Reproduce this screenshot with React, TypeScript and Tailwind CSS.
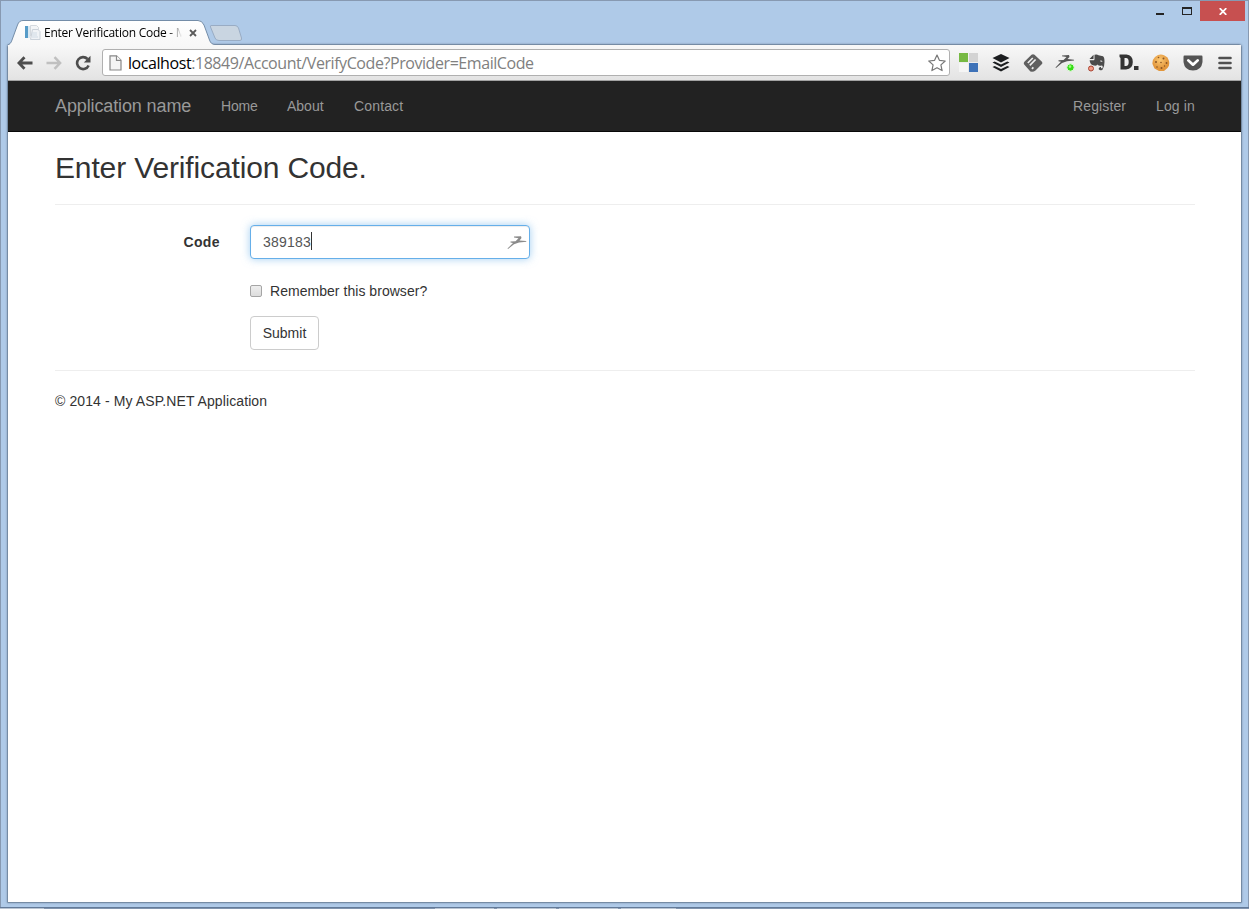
import type { ReactNode } from "react";

function Slot({ children }: { children: ReactNode }) {
  return <div className="flex h-full w-8 shrink-0 items-center justify-center pl-0.5 pt-px">{children}</div>;
}

function Bird({ className }: { className: string }) {
  return (
    <svg className={className} width="20" height="16" viewBox="0 0 20 16" fill="currentColor">
      <path d="M7 1.6 14 1.2 14.5 3 12.5 5.5 19 6 19.5 6.7 12 7.5 7 9.2 1 14 .5 13.6 6 8 3.5 7.4 3.5 6.6 8.5 6.3 11.5 3.2 7 2.5Z" />
    </svg>
  );
}

function TabStrip() {
  return (
    <div className="relative flex h-[43px] shrink-0 justify-between">
      <svg className="absolute left-0 top-0" width="260" height="44" viewBox="1 1 260 44">
        <defs>
          <linearGradient id="tab" x1="0" y1="0" x2="0" y2="1">
            <stop offset="0" stopColor="#fff" />
            <stop offset="1" stopColor="#f7f7f7" />
          </linearGradient>
        </defs>
        <path d="M7 45.5C10 44.5 11 43 12 40L17.5 25Q19 20.5 23 20.5H198Q202 20.5 204 25L209.500 40Q211 44.500 215 44.500L215 46H7Z" fill="url(#tab)" />
        <path d="M7.500 45C10 44 11 43 12 40L17.500 25Q19 20.500 23 20.500H198Q202 20.500 204 25L209.500 40Q211 44.500 215 44.500" fill="none" stroke="#748da8" />
        <path d="M211 25.500H235Q237.500 25.500 238.500 28L241.500 38Q242 40.500 240 40.500H219Q216 40.500 215 38L210.500 27Q210 25.500 211 25.500Z" fill="#c9d5e1" stroke="#99acc4" />
      </svg>
      <div className="relative flex items-center pl-6 pt-5">
        <svg width="16" height="16" viewBox="0 0 16 16">
          <path d="M0 1h3v12H0z" fill="#579cc8" />
          <path d="M3 1h2v12H3z" fill="#dbe9f2" />
          <path d="M5.500.500h6l2 2V11h-8z" fill="#f3f5f7" stroke="#d4d9de" />
          <path d="M7.500 4.500H13l2 2v8H5.500z" fill="#f0f3f6" stroke="#cbd2da" />
          <path d="M7 8h5M7 10h5M7 12h6" stroke="#d0dbe5" />
        </svg>
        <div className="ml-[3px] w-[138px] overflow-hidden whitespace-nowrap bg-gradient-to-r from-black from-90% to-transparent bg-clip-text font-['Open_Sans',sans-serif] text-[12px] leading-4 tracking-[-0.25px] text-transparent">
          Enter Verification Code - M
        </div>
        <svg className="ml-[7px]" width="8" height="8" viewBox="0 0 8 8">
          <path d="m1 1 6 6m0-6L1 7" stroke="#5b5b5b" strokeWidth="1.8" />
        </svg>
      </div>
      <div className="relative mr-[3px] flex h-5">
        <div className="mt-3 h-[2px] w-2 bg-[#242424]" />
        <div className="ml-[18px] mt-[6px] h-[8px] w-[10px] border border-t-2 border-[#242424]" />
        <div className="ml-2 flex h-5 w-[45px] items-center justify-center bg-[#c75050]">
          <svg width="8" height="7" viewBox="0 0 8 7">
            <path d="m.7.200 6.600 6.600m0-6.600L.7 6.800" stroke="#fff" strokeWidth="1.800" />
          </svg>
        </div>
      </div>
    </div>
  );
}

function Toolbar() {
  return (
    <div className="flex h-[36px] shrink-0 items-center border-b border-[#a3a3a3] bg-gradient-to-b from-[#f8f8f8] to-[#e3e3e3] pl-[9px]">
      <svg width="16" height="14" viewBox="0 0 16 14" fill="none" stroke="#4d4d4d" strokeWidth="2.800">
        <path d="M7.500 1.200 1.900 7l5.600 5.800M2 7h13.500" />
      </svg>
      <svg className="ml-[13px]" width="16" height="14" viewBox="0 0 16 14" fill="none" stroke="#c0c0c0" strokeWidth="2.500">
        <path d="m8.500 1.200 5.600 5.800-5.600 5.800M14 7H.5" />
      </svg>
      <svg className="ml-[13px]" width="16" height="16" viewBox="0 0 16 16">
        <path d="M12.500 4A6 6 0 1 0 13.600 10.500" fill="none" stroke="#4d4d4d" strokeWidth="2.600" />
        <path d="M15.500.800V7.500H8.800Z" fill="#4d4d4d" />
      </svg>
      <div className="ml-[11px] flex h-[27px] w-[848px] shrink-0 items-center rounded-[3px] border border-[#b0b0b0] bg-white pl-[6px] pr-[3px]">
        <svg width="13" height="16" viewBox="0 0 13 16">
          <path d="M1 .800H7.500L12 5.300V15H1Z" fill="#f5f5f5" stroke="#888" strokeWidth="1.200" />
          <path d="M7.500.800V5.300H12" fill="#fff" stroke="#888" strokeWidth="1.200" />
        </svg>
        <div className="ml-[6px] whitespace-nowrap font-['Open_Sans',sans-serif] text-[16px] leading-5 tracking-[-0.43px] text-[#808080]">
          <span className="text-black">localhost</span>:18849/Account/VerifyCode?Provider=EmailCode
        </div>
        <svg className="ml-auto" width="18" height="18" viewBox="0 0 18 18">
          <path d="m9 1 2.400 5.300 5.800.700-4.300 3.900 1.200 5.700L9 13.700l-5.100 2.900 1.200-5.700L.800 7l5.800-.700Z" fill="#fff" stroke="#777" strokeWidth="1.200" strokeLinejoin="round" />
        </svg>
      </div>
      <div className="ml-[2px] flex h-full">
        <Slot>
          <svg width="20" height="20" viewBox="0 0 20 20">
            <path d="M0 0h9v9H0z" fill="#77b943" />
            <path d="M10 0h9v9h-9z" fill="#d3d3d3" />
            <path d="M0 10h9v9H0z" fill="#f5f5f5" />
            <path d="M10 10h9v9h-9z" fill="#3e72b8" />
          </svg>
        </Slot>
        <Slot>
          <svg width="18" height="18" viewBox="0 0 18 18" fill="#1c1e20">
            <path d="m9 0 8.500 4L9 8.500.500 4Z" />
            <path d="m.500 8.400 2.200-1L9 10.500l6.300-3.100 2.200 1L9 12.900Z" />
            <path d="m.500 13 2.200-1L9 15.100l6.300-3.100 2.200 1L9 17.500Z" />
          </svg>
        </Slot>
        <Slot>
          <svg width="20" height="18" viewBox="0 0 20 18">
            <path d="M8.500.700Q10 -.400 11.500.700L18.700 7.500Q20 9 18.700 10.200L12.500 16.500Q11 17.700 9 17.700T6.500 16.500L1.200 10.500Q.300 9 1.400 7.700Z" fill="#5f5f5f" />
            <path d="m4.800 9 5-5m-3 7.300 5.800-5.800m-3.700 9.300 1.500-1.500" fill="none" stroke="#eee" strokeWidth="1.700" />
          </svg>
        </Slot>
        <Slot>
          <svg width="20" height="18" viewBox="0 0 20 18">
            <path d="M7 1.500 14 1 14.500 3 12.500 5 19 5.700 19 6.500 12 7.200 7 9 1 14 .500 13.500 6 7.700 3.500 7.200V6.300L8.500 6 11.500 3 7 2.300Z" fill="#565656" />
            <circle cx="15.500" cy="13.500" r="3.700" fill="#35dc16" stroke="#dff5da" />
            <circle cx="15" cy="12.600" r="1.300" fill="#9bff7e" />
          </svg>
        </Slot>
        <Slot>
          <svg width="18" height="18" viewBox="0 0 18 18">
            <path d="M5.600.800 5.500 5H1.500Z" fill="#444" />
            <path d="M6.500.800Q9-.200 10.500 1.300L15 2.200Q16.500 3 16.500 8T14.500 15.700Q12 17 11 15.500T12.300 13H13V14.200H14.500Q15.200 11.500 13.500 11.500 11 12.500 9.500 10.500 9 12 6 11.500 2 11 1.600 6.200H6Q6.500 6 6.500 5Z" fill="#4b4b4b" />
            <path d="M12 6.800q2-.700 2.500 1.300l-2-.500Z" fill="#e9e9e9" />
            <circle cx="3" cy="14.500" r="2.500" fill="#f49b86" stroke="#a94433" />
          </svg>
        </Slot>
        <Slot>
          <svg width="20" height="18" viewBox="0 0 20 18" fill="#343434">
            <path fillRule="evenodd" d="M.500.500H7.500Q13.800 1 13.800 8T7 15.500H1.500V4L.500 3ZM5.500 4V12H7Q9.700 12 9.700 8T7 4Z" />
            <path d="M15 12h4.500v4H15z" />
          </svg>
        </Slot>
        <Slot>
          <svg width="18" height="18" viewBox="0 0 18 18">
            <defs>
              <radialGradient id="cookie" cx=".45" cy=".35">
                <stop offset="0" stopColor="#fbc873" />
                <stop offset="1" stopColor="#e2963b" />
              </radialGradient>
            </defs>
            <path d="M6 1Q9-.300 12 1.200L15.500 3.500 17 7Q18 11 15.500 14L12 17H7L2.500 14.500.500 10Q0 6 3 3Z" fill="url(#cookie)" />
            <g fill="#8a5423">
              <circle cx="6.500" cy="3.500" r=".8" /><circle cx="11.500" cy="4.500" r="1" /><circle cx="4" cy="8" r="1" />
              <circle cx="9" cy="8.500" r=".8" /><circle cx="14.500" cy="9" r=".9" /><circle cx="5" cy="13" r=".8" />
              <circle cx="9.500" cy="14" r="1" /><circle cx="12.500" cy="12" r=".7" />
            </g>
          </svg>
        </Slot>
        <Slot>
          <svg width="20" height="16" viewBox="0 0 20 17" preserveAspectRatio="none">
            <path d="M1.500.500H18.500Q19.500.500 19.500 2V7.500Q18.500 16.500 10 16.500T.500 7.500V2Q.500.500 1.500.500Z" fill="#545454" />
            <path d="m5.300 5.700 4.700 4.600 4.700-4.600" fill="none" stroke="#fff" strokeWidth="2.800" strokeLinecap="round" strokeLinejoin="round" />
          </svg>
        </Slot>
        <Slot>
          <svg width="14" height="14" viewBox="0 0 14 14" stroke="#505050" strokeWidth="2.600" strokeLinecap="round">
            <path d="M1.500 2h11M1.500 7h11M1.500 12h11" />
          </svg>
        </Slot>
      </div>
    </div>
  );
}

function Page() {
  return (
    <div className="flex grow flex-col bg-white font-['Liberation_Sans',Arial,sans-serif] text-[14px] leading-5 text-[#333]">
      <nav className="flex h-[51px] shrink-0 items-center border-b border-[#080808] bg-[#222] pl-[47px] pr-[46px] text-[#999]">
        <span className="w-[136px] whitespace-nowrap text-[18px] tracking-[-0.12px]">Application name</span>
        <span className="ml-[30px] w-9 tracking-[-0.2px]">Home</span>
        <span className="ml-[30px] w-[37px]">About</span>
        <span className="ml-[30px] tracking-[0.15px]">Contact</span>
        <span className="ml-auto w-[53px] tracking-[0.12px]">Register</span>
        <span className="ml-[30px] w-[39px] tracking-[0.12px]">Log in</span>
      </nav>
      <main className="pl-[47px] pr-[46px] pt-[19px]">
        <h2 className="text-[30px] leading-[33px] tracking-[-0.14px]">Enter Verification Code.</h2>
        <hr className="mb-5 mt-5 border-[#eee]" />
        <form className="grid grid-cols-[165px_280px] gap-x-[30px]">
          <label className="pt-[7px] text-right font-bold tracking-[0.4px]">Code</label>
          <div className="flex h-[34px] items-center rounded-[4px] border border-[#66afe9] bg-white pl-3 pr-0.5 shadow-[inset_0_1px_1px_rgba(0,0,0,0.075),0_0_8px_rgba(102,175,233,0.6)]">
            <span className="tracking-[0.2px] text-[#555]">389183</span>
            <span className="-mt-0.5 h-[18px] w-px bg-[#333]" />
            <Bird className="ml-auto mt-0.5 text-[#8b8b8b]" />
          </div>
          <div className="col-start-2 mt-[22px] flex items-center">
            <span className="h-3 w-3 rounded-[2px] border border-[#a5a5a5] bg-gradient-to-b from-[#eee] to-[#ddd]" />
            <span className="ml-2 tracking-[0.04px]">Remember this browser?</span>
          </div>
          <button type="button" className="col-start-2 mt-[15px] h-[34px] w-[69px] rounded-[4px] border border-[#ccc] bg-white">
            Submit
          </button>
        </form>
        <hr className="my-5 border-[#eee]" />
        <footer className="tracking-[0.1px]">© 2014 - My ASP.NET Application</footer>
      </main>
    </div>
  );
}

export default function App() {
  return (
    <div className="flex h-[909px] w-[1249px] flex-col overflow-hidden bg-[#afcae8]">
      <div className="flex min-h-0 grow flex-col border border-b-0 border-[#8799b1]">
        <TabStrip />
        <div className="mx-[6px] mb-1 flex min-h-0 grow flex-col rounded-t-[3px] border border-[#758ba4] shadow-[0_0_2px_#758ba4]">
          <Toolbar />
          <Page />
        </div>
      </div>
      <div className="flex h-[2px] shrink-0 border-t border-[#637a98] bg-[#8194ae]">
        <div className="w-11 bg-[#bac5d3]" />
        <div className="ml-[391px] w-[59px] bg-[#bac5d3]" />
        <div className="ml-[3px] w-[59px] bg-[#bac5d3]" />
        <div className="ml-[3px] w-[59px] bg-[#bac5d3]" />
        <div className="ml-[3px] w-[55px] bg-[#bac5d3]" />
      </div>
    </div>
  );
}
